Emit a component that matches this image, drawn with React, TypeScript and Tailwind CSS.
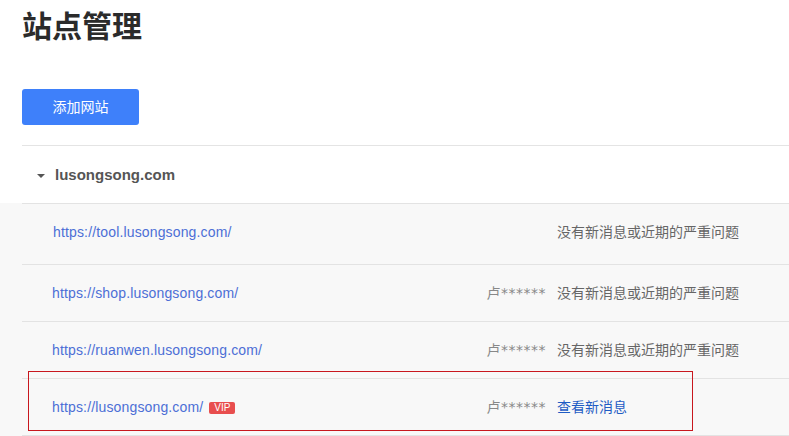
import React from "react";

const font = { fontFamily: '"Liberation Sans", "Noto Sans CJK SC", sans-serif' };
const starFont = { fontFamily: '"DejaVu Sans", "Noto Sans CJK SC", sans-serif' };

type Row = { url: string; user?: string; msg: string; vip?: boolean; link?: boolean; cls: string; pl: string };

const rows: Row[] = [
  { url: "https://tool.lusongsong.com/", msg: "没有新消息或近期的严重问题", cls: "h-[61px] pb-[4px]", pl: "pl-[31px]" },
  { url: "https://shop.lusongsong.com/", user: "卢******", msg: "没有新消息或近期的严重问题", cls: "h-[57px] pt-[1px]", pl: "pl-[30px]" },
  { url: "https://ruanwen.lusongsong.com/", user: "卢******", msg: "没有新消息或近期的严重问题", cls: "h-[57px] pt-[1px]", pl: "pl-[30px]" },
  { url: "https://lusongsong.com/", user: "卢******", msg: "查看新消息", vip: true, link: true, cls: "h-[57px] pt-[1px]", pl: "pl-[30px]" },
];

export default function App() {
  return (
    <div className="relative w-[789px] h-[436px] overflow-hidden bg-white" style={font}>
      <div className="pl-[22px] pt-[7px] bg-white flex flex-col items-start">
        <h1 className="text-[30px] leading-[40px] font-bold text-[#2b2b2b]">站点管理</h1>
        <button className="mt-[42px] w-[117px] h-[36px] rounded-[3px] bg-[#3e80fa] text-white text-[14px] flex items-center justify-center">
          添加网站
        </button>
        <div className="mt-[20px] self-stretch border-t border-[#e4e4e4] h-[58px] flex items-center gap-[10px] pl-[15px] pt-[2px] box-border">
          <span className="w-0 h-0 border-l-[4px] border-r-[4px] border-t-[4px] border-l-transparent border-r-transparent border-t-[#555]" />
          <span className="text-[15px] font-bold text-[#555]">lusongsong.com</span>
        </div>
      </div>
      <div className="bg-[#f8f8f8] pl-[22px]">
        {rows.map((r, i) => (
          <div
            key={i}
            className={`${r.cls} box-border border-t border-[#e3e3e3] flex items-center text-[14px]`}
          >
            <div className={`flex items-center flex-1 gap-[6px] ${r.pl}`}>
              <span className="text-[#4c6fd6] tracking-[0.15px]">{r.url}</span>
              {r.vip && (
                <span className="px-[5px] h-[12px] leading-[12px] text-[10px] rounded-[2px] bg-[#e84e4e] text-white">
                  VIP
                </span>
              )}
            </div>
            <div className="flex items-center gap-[11px] pr-[49px]">
              <span className="text-[#888] tracking-[0.5px]" style={starFont}>{r.user}</span>
              <span className={`w-[183px] ${r.link ? "text-[#1f5cc4]" : "text-[#666]"}`}>{r.msg}</span>
            </div>
          </div>
        ))}
        <div className="border-t border-[#e3e3e3] h-[10px]" />
      </div>
      <div className="absolute left-[28px] top-[371px] w-[665px] h-[60px] border border-[#c8171e]" />
    </div>
  );
}
